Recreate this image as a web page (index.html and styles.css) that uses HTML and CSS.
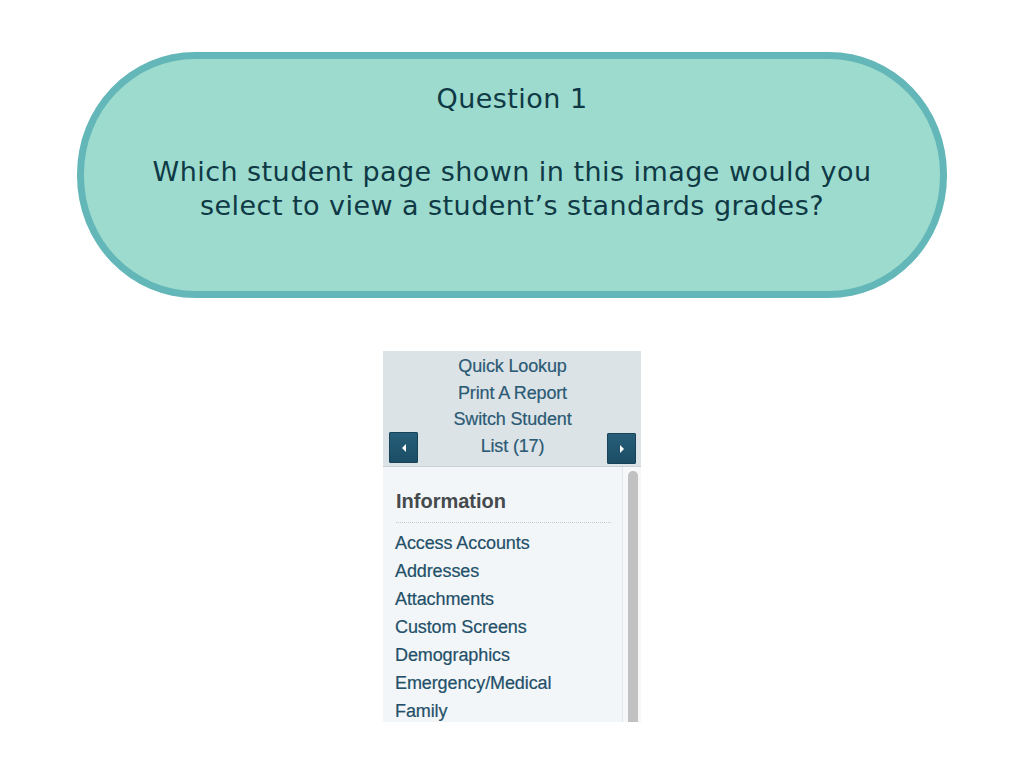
FILE: index.html
```html
<!DOCTYPE html>
<html>
<head>
<meta charset="utf-8">
<link rel="stylesheet" href="styles.css">
</head>
<body>
<div class="pill">
  <div class="q-title">Question 1</div>
  <div class="q-text">Which student page shown in this image would you<br>select to view a student’s standards grades?</div>
</div>
<div class="panel">
  <div class="top">
    <div class="btn btn-left"><svg width="8" height="10" viewBox="0 0 8 10"><path d="M6 1 L2 5 L6 9 Z" fill="#ffffff"/></svg></div>
    <div class="links">
      <div>Quick Lookup</div>
      <div>Print A Report</div>
      <div>Switch Student</div>
      <div>List (17)</div>
    </div>
    <div class="btn btn-right"><svg width="8" height="10" viewBox="0 0 8 10"><path d="M2 1 L6 5 L2 9 Z" fill="#ffffff"/></svg></div>
  </div>
  <div class="body">
    <div class="list">
      <div class="heading">Information</div>
      <div class="item">Access Accounts</div>
      <div class="item">Addresses</div>
      <div class="item">Attachments</div>
      <div class="item">Custom Screens</div>
      <div class="item">Demographics</div>
      <div class="item">Emergency/Medical</div>
      <div class="item">Family</div>
    </div>
    <div class="track"><div class="thumb"></div></div>
  </div>
</div>
</body>
</html>
```
FILE: styles.css
```css
html, body {
  margin: 0;
  padding: 0;
  background: #ffffff;
}
body {
  width: 1024px;
  height: 768px;
  overflow: hidden;
  padding-top: 52px;
  box-sizing: border-box;
}
.pill {
  margin-left: 77px;
  width: 870px;
  height: 246px;
  box-sizing: border-box;
  border: 7px solid #64b7b8;
  border-radius: 118px / 122px;
  background: #9cdbce;
  font-family: "DejaVu Sans", Verdana, sans-serif;
  color: #0f3945;
  text-align: center;
  padding-top: 23px;
}
.q-title {
  font-size: 27px;
  line-height: 34px;
  letter-spacing: 0.45px;
}
.q-text {
  margin-top: 39px;
  font-size: 27px;
  line-height: 34px;
  letter-spacing: 0.45px;
}
.panel {
  margin-left: 383px;
  margin-top: 53px;
  width: 258px;
  height: 371px;
  overflow: hidden;
  font-family: "Liberation Sans", Arial, sans-serif;
  -webkit-text-stroke: 0.2px;
}
.top {
  height: 115px;
  background: #dce3e7;
  border-bottom: 1px solid #c9d1d5;
  display: flex;
  align-items: flex-start;
  padding: 0 5px 0 6px;
}
.links {
  flex: 1;
  text-align: center;
  padding-top: 2px;
  font-size: 18px;
  line-height: 26.7px;
  color: #2b5a74;
  letter-spacing: -0.15px;
}
.btn {
  margin-top: 81px;
  width: 29px;
  height: 31px;
  border-radius: 2px;
  background: linear-gradient(#285f7a, #1b4c64);
  box-shadow: inset 0 0 0 1px #174359;
  display: flex;
  align-items: center;
  justify-content: center;
  -webkit-text-stroke: 0;
}
.btn-right {
  margin-top: 82px;
}
.body {
  display: flex;
  height: 255px;
}
.list {
  width: 240px;
  background: #f2f6f9;
  border-right: 1px solid #e3e7ea;
  padding: 19px 0 0 12px;
  box-sizing: border-box;
}
.heading {
  font-size: 20px;
  font-weight: bold;
  color: #454a4d;
  line-height: 30px;
  margin-left: 1px;
  width: 215px;
  padding-bottom: 6px;
  border-bottom: 1px dotted #c4cacd;
  margin-bottom: 6px;
  -webkit-text-stroke: 0;
}
.item {
  font-size: 18px;
  line-height: 28px;
  color: #235068;
  letter-spacing: -0.1px;
}
.track {
  flex: 1;
  background: #f6f7f8;
  padding: 4px 3px 0 5px;
}
.thumb {
  height: 300px;
  background: #c1c1c1;
  border-radius: 5px 5px 0 0;
}
```
